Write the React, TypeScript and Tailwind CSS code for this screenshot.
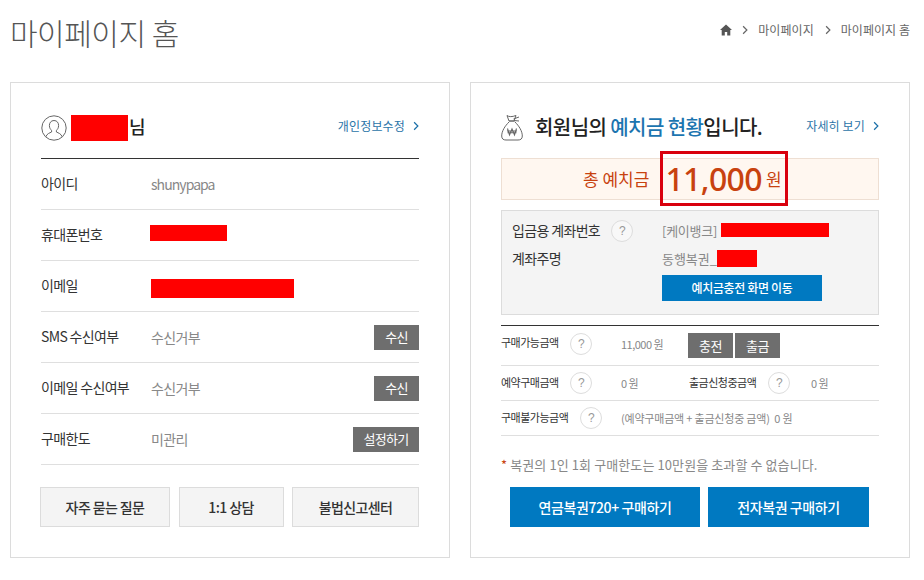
import React from 'react';

function Chevron({ className }: { className: string }) {
  return (
    <svg viewBox="0 0 8 12" className={className} fill="none" stroke="currentColor">
      <path d="M1.5 1 L6.5 6 L1.5 11" strokeWidth="1.6" />
    </svg>
  );
}

function Help({ className = '' }: { className?: string }) {
  return (
    <span className={`flex h-[22px] w-[22px] shrink-0 items-center justify-center rounded-full border border-[#ddd] bg-white/40 font-['Liberation_Sans',sans-serif] text-[12px] text-[#999] ${className}`}>
      ?
    </span>
  );
}

function GrayButton({ label, className }: { label: string; className: string }) {
  return (
    <button className={`flex h-[25px] items-center justify-center bg-[#6e6e6e] text-[13px] text-white ${className}`}>
      {label}
    </button>
  );
}

function InfoRow({ label, children }: { label: string; children: React.ReactNode }) {
  return (
    <div className="flex h-[51px] items-center border-b border-[#dfdfdf]">
      <span className="mb-[2px] w-[110px] shrink-0 text-[14px] tracking-[-0.65px] text-[#333]">{label}</span>
      <div className="flex flex-1 items-center justify-between text-[14px] tracking-[-0.65px] text-[#888]">{children}</div>
    </div>
  );
}

export default function App() {
  return (
    <div className="h-[580px] w-[924px] overflow-hidden bg-white px-[10px] font-['Noto_Sans_CJK_KR','Noto_Sans',sans-serif]">
      {/* Title */}
      <div className="flex h-[82px] justify-between pr-[4px]">
        <h1 className="mt-[10px] text-[30px] leading-[44px] font-light tracking-[-0.5px] text-[#555]">마이페이지 홈</h1>
        <div className="mt-[20px] flex h-[20px] items-center text-[12px] tracking-[0.05px] text-[#666]">
          <svg viewBox="0 0 12 12" className="h-[12px] w-[12px] text-[#555]" fill="currentColor">
            <path d="M6 0.5 L12 6 L10.3 6 L10.3 11.5 L7.2 11.5 L7.2 8 L4.8 8 L4.8 11.5 L1.7 11.5 L1.7 6 L0 6 Z" />
          </svg>
          <Chevron className="mx-[10px] h-[10px] w-[6px] text-[#666]" />
          <span>마이페이지</span>
          <Chevron className="mr-[10px] ml-[11px] h-[10px] w-[6px] text-[#666]" />
          <span>마이페이지 홈</span>
        </div>
      </div>

      <div className="flex gap-[20px]">
        {/* Left card */}
        <section className="h-[476px] w-[440px] border border-[#dcdcdc] px-[30px] pt-[30px]">
          <div className="flex h-[45px] items-start justify-between">
            <div className="flex items-center">
              <svg viewBox="0 0 26 26" className="mt-px h-[26px] w-[26px] text-[#666]" fill="none" stroke="currentColor" strokeWidth="1">
                <circle cx="13" cy="13" r="12.2" />
                <path d="M13 5.5 C9.8 5.5 8.4 8 8.4 10.5 C8.4 13 9.6 14.6 10.6 15.4 L10.6 17 C8.6 18 6 18.6 4.8 21.8 M13 5.5 C16.2 5.5 17.6 8 17.6 10.5 C17.6 13 16.4 14.6 15.4 15.4 L15.4 17 C17.4 18 20 18.6 21.2 21.8" />
              </svg>
              <span className="ml-[4px] h-[26px] w-[57px] bg-[#ff0000]" />
              <span className="mb-[3px] ml-px text-[18px] leading-[26px] font-medium text-[#222]">님</span>
            </div>
            <a className="mt-[4px] flex items-center text-[12px] tracking-[0.15px] text-[#2b74a8]">
              개인정보수정
              <Chevron className="ml-[8px] h-[10px] w-[6px] text-[#1a6fa8]" />
            </a>
          </div>

          <div className="border-t border-[#333]">
            <InfoRow label="아이디">
              <span className="tracking-[-0.95px]">shunypapa</span>
            </InfoRow>
            <InfoRow label="휴대폰번호">
              <span className="mb-[4px] h-[16px] w-[77px] -translate-x-px bg-[#ff0000]" />
            </InfoRow>
            <InfoRow label="이메일">
              <span className="mt-[4px] h-[19px] w-[143px] bg-[#ff0000]" />
            </InfoRow>
            <InfoRow label="SMS 수신여부">
              <span>수신거부</span>
              <GrayButton label="수신" className="w-[45px]" />
            </InfoRow>
            <InfoRow label="이메일 수신여부">
              <span>수신거부</span>
              <GrayButton label="수신" className="w-[45px]" />
            </InfoRow>
            <InfoRow label="구매한도">
              <span>미관리</span>
              <GrayButton label="설정하기" className="w-[66px]" />
            </InfoRow>
          </div>

          <div className="mt-[22px] -ml-px flex justify-between text-[14px] font-medium tracking-[-0.6px] text-[#333]">
            <button className="h-[40px] w-[130px] border border-[#dcdcdc] bg-[#f4f4f4]">자주 묻는 질문</button>
            <button className="h-[40px] w-[105px] border border-[#dcdcdc] bg-[#f4f4f4]">1:1 상담</button>
            <button className="h-[40px] w-[127px] border border-[#dcdcdc] bg-[#f4f4f4]">불법신고센터</button>
          </div>
        </section>

        {/* Right card */}
        <section className="h-[476px] w-[440px] border border-[#dcdcdc] px-[30px] pt-[30px]">
          <div className="flex h-[45px] items-start justify-between">
            <div className="flex items-center">
              <svg viewBox="0 0 22 27" className="h-[27px] w-[22px] text-[#666]" fill="none" stroke="currentColor" strokeWidth="1">
                <path d="M6 1.5 C8 3 11 3 15 1.5 L13 7 L8 7 Z" />
                <path d="M8 7 L14 7 M12.5 5 L18 3 M13 6.5 L18 7" />
                <path d="M8 8 C4 12 0.7 17 0.7 22 C0.7 25 2.5 26 5 26 L17 26 C19.5 26 21.3 25 21.3 22 C21.3 17 18 12 14 8" />
                <path d="M6.5 14.5 L8.5 21 L11 15 L13.5 21 L15.5 14.5 M6 17 L16 17 M6.5 18.8 L15.5 18.8" strokeWidth="1.1" />
              </svg>
              <h2 className="mb-[2px] ml-[12px] text-[20px] leading-[27px] font-medium tracking-[-0.57px] text-[#222]">
                회원님의 <span className="text-[#1c75b0]">예치금 현황</span>입니다.
              </h2>
            </div>
            <a className="mt-[4px] flex items-center text-[12px] tracking-[0.15px] text-[#2b74a8]">
              자세히 보기
              <Chevron className="ml-[8px] h-[10px] w-[6px] text-[#1a6fa8]" />
            </a>
          </div>

          <div className="relative flex h-[42px] items-center border border-[#eedfd3] bg-[#fff7f0] pl-[81px] text-[#c8420f]">
            <span className="text-[17px]">총 예치금</span>
            <span className="ml-[16px] font-['Noto_Sans','Open_Sans',sans-serif] text-[32px] leading-[40px] font-medium tracking-[-0.6px]">11,000</span>
            <span className="ml-[4px] text-[17px]">원</span>
            <div className="absolute top-[-8px] left-[158px] h-[55px] w-[128px] border-[3px] border-[#d9000d]" />
          </div>

          <div className="mt-[10px] h-[105px] border border-[#dcdcdc] bg-[#f4f4f4] pt-[9px] pl-[10px] text-[14px] tracking-[-0.65px]">
            <div className="flex h-[22px] items-center">
              <span className="mb-[2px] w-[99px] text-[#333]">입금용 계좌번호</span>
              <Help />
              <span className="ml-[29px] text-[13px] tracking-[-0.25px] text-[#888]">[케이뱅크]</span>
              <span className="mb-[3px] ml-[4px] h-[14px] w-[108px] bg-[#ff0000]" />
            </div>
            <div className="mt-[8px] flex h-[17px] items-center">
              <span className="w-[150px] text-[#333]">계좌주명</span>
              <span className="text-[13px] tracking-[-0.05px] text-[#888]">동행복권_</span>
              <span className="h-[17px] w-[40px] bg-[#ff0000]" />
            </div>
            <button className="mt-[8px] ml-[150px] h-[26px] w-[160px] bg-[#0079c1] text-[12px] font-medium tracking-[-0.35px] text-white">
              예치금충전 화면 이동
            </button>
          </div>

          <div className="mt-[10px] border-t border-[#333] text-[11px] tracking-[-0.5px]">
            <div className="flex h-[40px] items-center border-b border-[#dfdfdf]">
              <span className="mb-[6px] w-[69px] text-[#333]">구매가능금액</span>
              <Help className="mb-[4px]" />
              <span className="mb-[2px] ml-[29px] w-[67px] text-[#888]">11,000 원</span>
              <GrayButton label="충전" className="w-[45px]" />
              <GrayButton label="출금" className="ml-[2px] w-[45px]" />
            </div>
            <div className="flex h-[35px] items-center border-b border-[#dfdfdf]">
              <span className="mb-[2px] w-[69px] text-[#333]">예약구매금액</span>
              <Help />
              <span className="ml-[29px] w-[68px] text-[#888]">0 원</span>
              <span className="mb-[2px] w-[79px] text-[#333]">출금신청중금액</span>
              <Help />
              <span className="ml-[21px] text-[#888]">0 원</span>
            </div>
            <div className="flex h-[35px] items-center border-b border-[#dfdfdf]">
              <span className="mb-[2px] w-[79px] text-[#333]">구매불가능금액</span>
              <Help />
              <span className="ml-[19px] tracking-[-0.2px] text-[#888]">(예약구매금액 + 출금신청중 금액)&nbsp; 0 원</span>
            </div>
          </div>

          <p className="mt-[19px] text-[13px] leading-[19px] tracking-[0.1px] text-[#888]">
            <span className="text-[#c8420f]">*</span> 복권의 1인 1회 구매한도는 10만원을 초과할 수 없습니다.
          </p>

          <div className="mt-[13px] ml-[9px] flex gap-[8px] text-[14px] font-medium tracking-[-0.4px] text-white">
            <button className="h-[40px] w-[190px] bg-[#0079c1]">연금복권720+ 구매하기</button>
            <button className="h-[40px] w-[161px] bg-[#0079c1]">전자복권 구매하기</button>
          </div>
        </section>
      </div>
    </div>
  );
}
